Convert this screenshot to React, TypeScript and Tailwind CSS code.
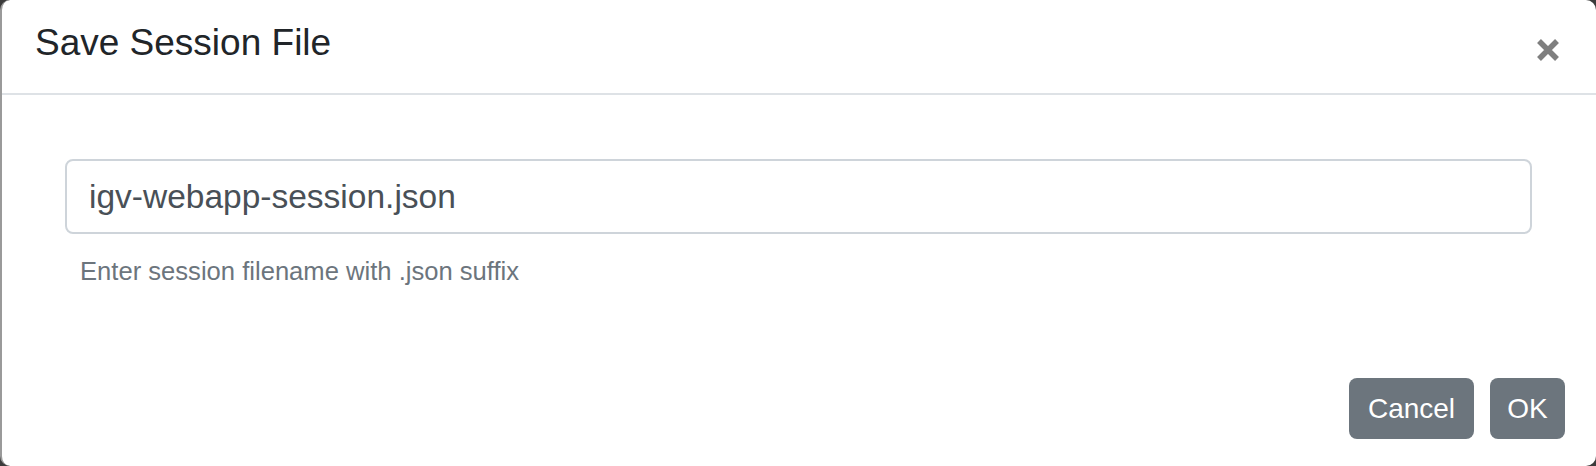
import React, { useState } from 'react';

const SaveSessionModal = () => {
  const [filename, setFilename] = useState('igv-webapp-session.json');

  return (
    <div className="h-full w-full bg-white rounded-[10px] border-l-2 border-[#9a9a9a] flex flex-col font-['Liberation_Sans',Arial,sans-serif]">
      {/* header */}
      <div className="flex justify-between items-start h-[95px] pl-[33px] pr-[35px] border-b-2 border-[#dee2e6]">
        <h5 className="pt-[20px] text-[37px] leading-[46px] text-[#212529]">Save Session File</h5>
        <button className="mt-[38px] text-[#7f7f7f]" aria-label="Close">
          <svg width="26" height="24" viewBox="0 0 26 24">
            <path d="M4 3 L22 21 M22 3 L4 21" stroke="currentColor" strokeWidth="5.5" />
          </svg>
        </button>
      </div>

      {/* body */}
      <div className="flex-1 pt-[64px] pl-[63px] pr-[64px]">
        <input
          type="text"
          value={filename}
          onChange={e => setFilename(e.target.value)}
          className="w-full h-[75px] px-[22px] border-2 border-[#ced4da] rounded-[8px] text-[33.5px] text-[#495057] outline-none"
        />
        <div className="mt-[22px] pl-[15px] text-[25.6px] leading-[30px] text-[#6c757d]">
          Enter session filename with .json suffix
        </div>
      </div>

      {/* footer */}
      <div className="flex justify-end gap-[16px] pr-[31px] pb-[27px]">
        <button className="w-[125px] h-[61px] rounded-[8px] bg-[#6c757d] text-white text-[28px] flex items-center justify-center">
          Cancel
        </button>
        <button className="w-[75px] h-[61px] rounded-[8px] bg-[#6c757d] text-white text-[28px] flex items-center justify-center">
          OK
        </button>
      </div>
    </div>
  );
};

const App = () => {
  return (
    <div className="w-[1596px] h-[466px] bg-[#3b3b3b] overflow-hidden">
      <SaveSessionModal />
    </div>
  );
};

export default App;
